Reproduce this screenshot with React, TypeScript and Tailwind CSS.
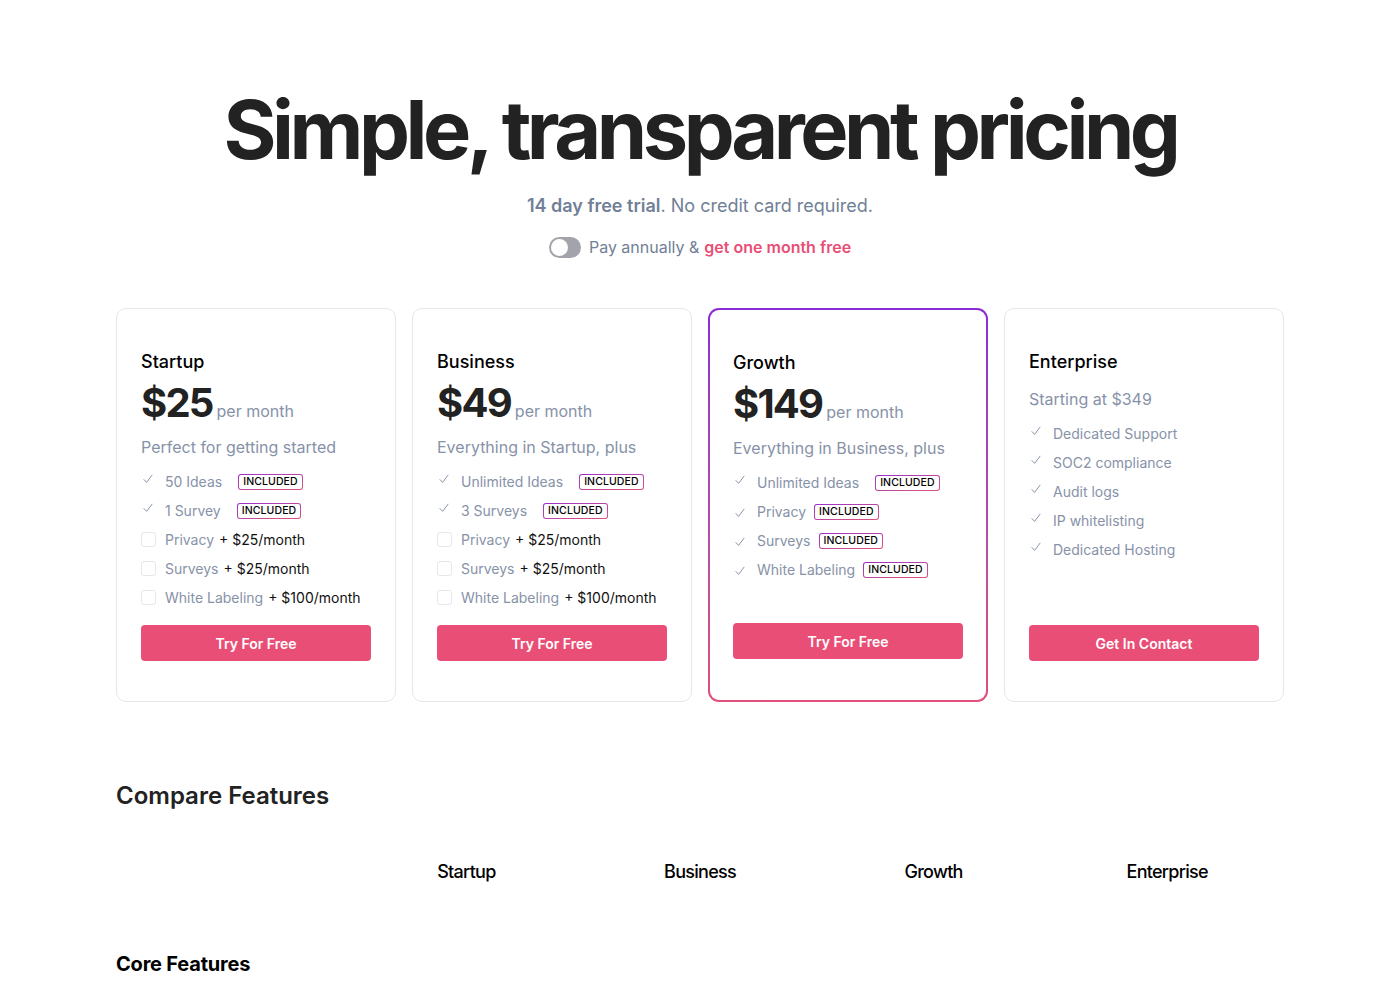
import { useState } from "react";

type Feature = {
  label: string;
  included: boolean;
  addon?: string;
};

type Plan = {
  name: string;
  price?: string;
  starting?: string;
  blurb?: string;
  features: Feature[];
  cta: string;
  highlight?: boolean;
};

const PLANS: Plan[] = [
  {
    name: "Startup",
    price: "$25",
    blurb: "Perfect for getting started",
    features: [
      { label: "50 Ideas", included: true },
      { label: "1 Survey", included: true },
      { label: "Privacy", included: false, addon: "+ $25/month" },
      { label: "Surveys", included: false, addon: "+ $25/month" },
      { label: "White Labeling", included: false, addon: "+ $100/month" },
    ],
    cta: "Try For Free",
  },
  {
    name: "Business",
    price: "$49",
    blurb: "Everything in Startup, plus",
    features: [
      { label: "Unlimited Ideas", included: true },
      { label: "3 Surveys", included: true },
      { label: "Privacy", included: false, addon: "+ $25/month" },
      { label: "Surveys", included: false, addon: "+ $25/month" },
      { label: "White Labeling", included: false, addon: "+ $100/month" },
    ],
    cta: "Try For Free",
  },
  {
    name: "Growth",
    price: "$149",
    blurb: "Everything in Business, plus",
    features: [
      { label: "Unlimited Ideas", included: true },
      { label: "Privacy", included: true },
      { label: "Surveys", included: true },
      { label: "White Labeling", included: true },
    ],
    cta: "Try For Free",
    highlight: true,
  },
  {
    name: "Enterprise",
    starting: "Starting at $349",
    features: [
      { label: "Dedicated Support", included: true },
      { label: "SOC2 compliance", included: true },
      { label: "Audit logs", included: true },
      { label: "IP whitelisting", included: true },
      { label: "Dedicated Hosting", included: true },
    ],
    cta: "Get In Contact",
  },
];

function Check() {
  return (
    <svg width="10" height="10" viewBox="0 0 10 10" fill="none" className="shrink-0 text-[#8a94a8]">
      <path d="M1 5.6 L3.6 8.4 L9 1.2" stroke="currentColor" strokeWidth="1" strokeLinecap="round" strokeLinejoin="round" />
    </svg>
  );
}

function IncludedBadge() {
  return (
    <span className="rounded-[3px] bg-gradient-to-br from-[#9b2bc9] to-[#e0507a] p-px">
      <span className="block rounded-[2px] bg-white px-[4px] text-[10.5px] leading-[14px] font-medium tracking-[0.01em] text-black">
        INCLUDED
      </span>
    </span>
  );
}

function FeatureRow({
  feature,
  badge,
  raised,
  gap,
}: {
  feature: Feature;
  badge: boolean;
  raised: boolean;
  gap: "wide" | "narrow";
}) {
  if (!feature.included) {
    return (
      <li className="flex h-[29px] items-center">
        <span className="mr-[9px] h-[15px] w-[15px] shrink-0 rounded-[3px] border border-[#e5e7eb]" />
        <span className="text-[#8792a8]">{feature.label}</span>
        <span className="ml-[5px] text-[#111]">{feature.addon}</span>
      </li>
    );
  }

  return (
    <li className="flex h-[29px] items-center">
      <span className={`mr-[12px] ml-[2px] ${raised ? "-mt-[6px]" : "mt-[2px]"}`}>
        <Check />
      </span>
      <span className="text-[#8792a8]">{feature.label}</span>
      {badge && (
        <span className={`flex ${gap === "wide" ? "ml-4" : "ml-2"}`}>
          <IncludedBadge />
        </span>
      )}
    </li>
  );
}

function PlanBody({ plan }: { plan: Plan }) {
  const growth = !!plan.highlight;

  return (
    <div className={`flex h-full flex-col px-6 pt-[42px] ${growth ? "pb-[41px]" : "pb-[40px]"}`}>
      <h3 className="text-[18px] leading-[22px] font-medium text-black">{plan.name}</h3>

      {plan.price ? (
        <>
          <div className="mt-[8px] flex items-baseline">
            <span className="text-[40px] leading-[44px] font-bold tracking-[-0.045em] text-[#222]">
              {plan.price}
            </span>
            <span className="ml-[4px] text-[16px] text-[#8792a8]">per month</span>
          </div>
          <p className="mt-[11px] text-[16px] leading-[22px] text-[#8792a8]">{plan.blurb}</p>
          <ul className="mt-[9px] text-[14px]">
            {plan.features.map((f, i) => (
              <FeatureRow
                key={f.label}
                feature={f}
                badge
                raised={!growth || i === 0}
                gap={!growth || i === 0 ? "wide" : "narrow"}
              />
            ))}
          </ul>
        </>
      ) : (
        <>
          <p className="mt-[15px] text-[16px] leading-[22px] text-[#8792a8]">{plan.starting}</p>
          <ul className="mt-[9px] text-[14px]">
            {plan.features.map((f) => (
              <FeatureRow key={f.label} feature={f} badge={false} raised gap="wide" />
            ))}
          </ul>
        </>
      )}

      <div className="mt-auto">
        <button
          type="button"
          className="h-9 w-full rounded-[4px] bg-[#e94e76] text-[14px] font-semibold text-white"
        >
          {plan.cta}
        </button>
      </div>
    </div>
  );
}

function PlanCard({ plan }: { plan: Plan }) {
  if (plan.highlight) {
    return (
      <div className="h-[394px] rounded-[11px] bg-gradient-to-b from-[#8a2bd6] to-[#e0507a] p-[2px]">
        <div className="h-full rounded-[9px] bg-white [&>div]:px-[23px]">
          <PlanBody plan={plan} />
        </div>
      </div>
    );
  }

  return (
    <div className="h-[394px] rounded-[10px] border border-[#e5e7eb] bg-white">
      <PlanBody plan={plan} />
    </div>
  );
}

export default function App() {
  const [annual, setAnnual] = useState(false);

  return (
    <div className="min-h-screen bg-white font-['Inter','Liberation_Sans',sans-serif] text-[#222]">
      <div className="mx-auto w-[1168px] pt-[78px]">
        <h1 className="text-center text-[81px] leading-[104px] font-bold tracking-[-0.055em] text-[#222]">
          Simple, transparent pricing
        </h1>

        <p className="mt-[10px] text-center text-[18px] leading-[28px] text-[#718096]">
          <span className="font-semibold">14 day free trial</span>. No credit card required.
        </p>

        <div className="mt-[15px] flex items-center justify-center">
          <button
            type="button"
            onClick={() => setAnnual(!annual)}
            className="relative mr-[8px] h-[21px] w-[32px] rounded-full bg-[#a3a3ab]"
          >
            <span
              className={`absolute top-[2px] h-[17px] w-[17px] rounded-full bg-white ${
                annual ? "left-[13px]" : "left-[2px]"
              }`}
            />
          </button>
          <span className="text-[16px] text-[#718096]">Pay annually &amp; </span>
          <span className="ml-[5px] text-[16px] font-semibold text-[#e94e76]">get one month free</span>
        </div>

        <div className="mt-[49px] grid grid-cols-4 gap-4">
          {PLANS.map((plan) => (
            <PlanCard key={plan.name} plan={plan} />
          ))}
        </div>

        <h2 className="mt-[79px] text-[24px] leading-[30px] font-semibold text-[#222]">Compare Features</h2>

        <div className="mt-[47px] grid grid-cols-5 text-[18px] font-medium tracking-[-0.04em] text-black">
          <div />
          <div className="text-center">Startup</div>
          <div className="text-center">Business</div>
          <div className="text-center">Growth</div>
          <div className="text-center">Enterprise</div>
        </div>

        <h3 className="mt-[64px] text-[20px] font-bold tracking-[-0.01em] text-black">Core Features</h3>
      </div>
    </div>
  );
}
